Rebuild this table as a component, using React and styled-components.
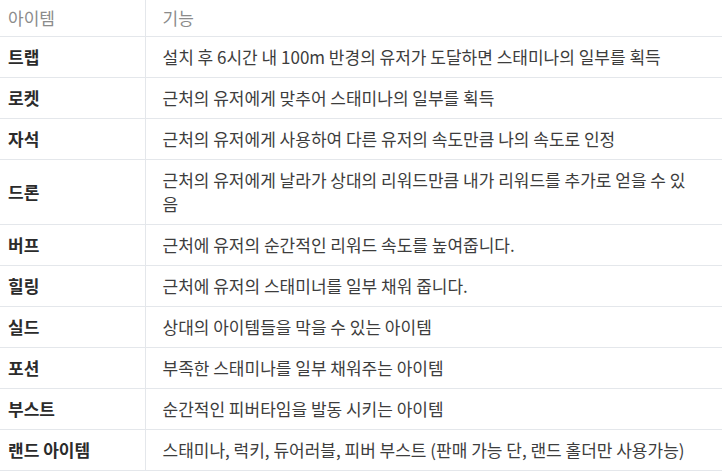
import React from "react";
import styled, { createGlobalStyle } from "styled-components";

const Global = createGlobalStyle`
  html, body { margin: 0; padding: 0; background: #ffffff; }
  body { font-family: "Noto Sans CJK KR", "Noto Sans", sans-serif; }
`;

const Table = styled.table`
  width: 100%;
  border-collapse: collapse;
  table-layout: fixed;
  font-size: 17px;
  line-height: 24px;
  color: #3a3a3a;
`;

const HeadCell = styled.th`
  text-align: left;
  font-weight: 400;
  color: #8b8b8b;
  padding: 6px ${(p) => (p.$first ? "8px" : "34px")} 6px
    ${(p) => (p.$first ? "8px" : "17px")};
  border-bottom: 1px solid #e4e7eb;
  border-right: ${(p) => (p.$first ? "1px solid #e4e7eb" : "none")};
  width: ${(p) => (p.$first ? "145px" : "auto")};
  box-sizing: border-box;
`;

const Cell = styled.td`
  padding: 8px ${(p) => (p.$first ? "8px" : "34px")} 8px
    ${(p) => (p.$first ? "8px" : "17px")};
  border-bottom: 1px solid #e4e7eb;
  border-right: ${(p) => (p.$first ? "1px solid #e4e7eb" : "none")};
  font-weight: ${(p) => (p.$first ? 700 : 400)};
  color: ${(p) => (p.$first ? "#2b2b2b" : "#3d3d3d")};
  vertical-align: middle;
`;

const rows = [
  ["트랩", "설치 후 6시간 내 100m 반경의 유저가 도달하면 스태미나의 일부를 획득"],
  ["로켓", "근처의 유저에게 맞추어 스태미나의 일부를 획득"],
  ["자석", "근처의 유저에게 사용하여 다른 유저의 속도만큼 나의 속도로 인정"],
  ["드론", "근처의 유저에게 날라가 상대의 리워드만큼 내가 리워드를 추가로 얻을 수 있음"],
  ["버프", "근처에 유저의 순간적인 리워드 속도를 높여줍니다."],
  ["힐링", "근처에 유저의 스태미너를 일부 채워 줍니다."],
  ["실드", "상대의 아이템들을 막을 수 있는 아이템"],
  ["포션", "부족한 스태미나를 일부 채워주는 아이템"],
  ["부스트", "순간적인 피버타임을 발동 시키는 아이템"],
  ["랜드 아이템", "스태미나, 럭키, 듀어러블, 피버 부스트 (판매 가능 단, 랜드 홀더만 사용가능)"],
];

export default function App() {
  return (
    <>
      <Global />
      <Table>
        <thead>
          <tr>
            <HeadCell $first>아이템</HeadCell>
            <HeadCell>기능</HeadCell>
          </tr>
        </thead>
        <tbody>
          {rows.map(([name, desc]) => (
            <tr key={name}>
              <Cell $first>{name}</Cell>
              <Cell>{desc}</Cell>
            </tr>
          ))}
        </tbody>
      </Table>
    </>
  );
}
